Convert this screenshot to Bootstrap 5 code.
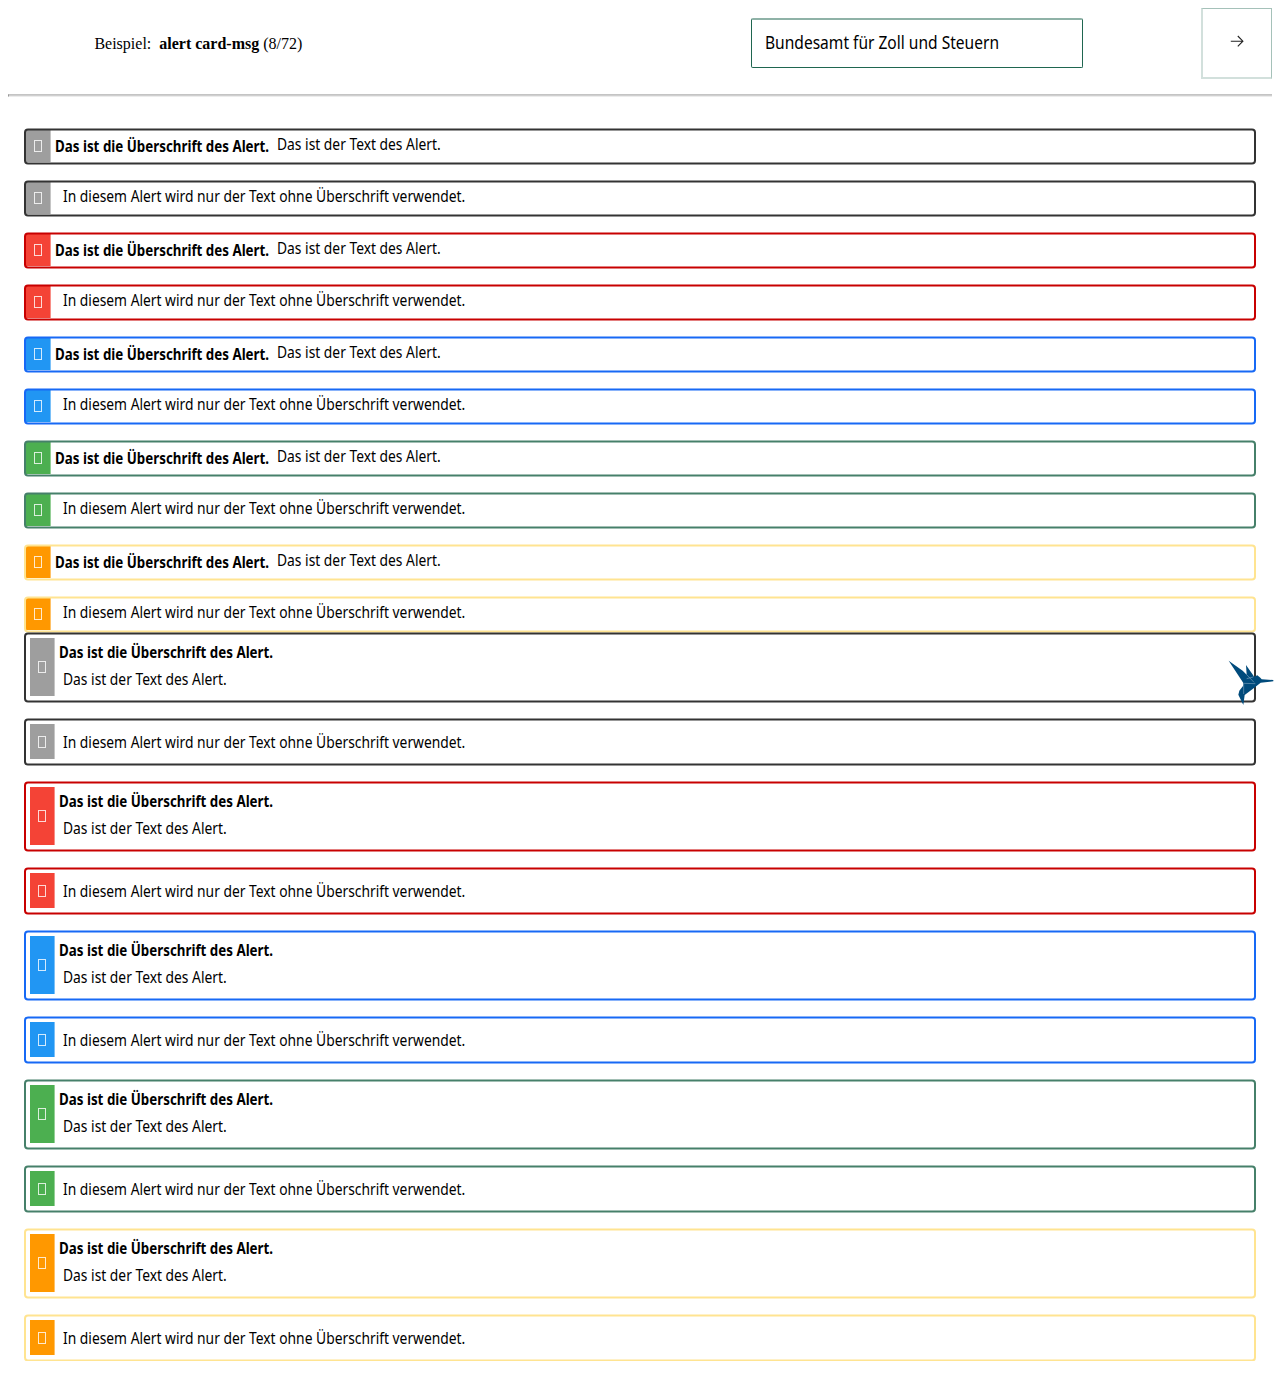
<!DOCTYPE html>
<html lang="de">
<head>
<meta charset="utf-8">
<meta name="viewport" content="width=device-width, initial-scale=1">
<title>alert card-msg</title>
<link href="https://cdn.jsdelivr.net/npm/bootstrap@5.3.0/dist/css/bootstrap.min.css" rel="stylesheet">
<style>
body { color: #000; background: #fff; font-family: "Noto Sans", sans-serif; }
.example-bar { height: 86px; margin: 8px 8px 0; }
.example-name { font-family: "Liberation Serif", serif; font-size: 16px; line-height: 18px; padding-left: 86.4px; margin-bottom: 15px; width: 743px; }
.office-box { width: 332px; height: 50px; border: 1px solid #1f6650; border-top: 2px solid #8fb2a7; border-radius: 2px; padding: 0 0 3px 13.4px; font-size: 18px; margin-bottom: 16px; line-height: 24px; }
.next-btn { width: 71px; height: 71px; border: 1px solid #a5c1b9; border-left: 2px solid #d2e0dc; border-bottom: 2px solid #d2e0dc; background: #fff; padding-bottom: 6px; margin-bottom: 15px; }
.divider { height: 3px; margin: 0 8px -1px; border-top: 1px solid #c4c4c4; border-bottom: 1px solid #ececec; border-left: 1px solid #999; background: #cfcfcf; }
.narrow { display: inline-block; white-space: nowrap; transform: scaleX(.864); transform-origin: 0 50%; }
.msg-list { padding: 32px 24px 0; gap: 16px; }
.msg { --edge: #333; --fill: #9e9e9e; border: 0; border-radius: 4px; color: #000; height: 36px; padding: 2px; font-size: 16px; line-height: 24px; margin: 0; }
.msg::after { content: ""; position: absolute; inset: 0; border: 2px solid var(--edge); border-radius: 4px; transform: translateY(.5px); pointer-events: none; }
.msg-icon { width: 25px; flex: none; background: var(--fill); border-right: 1px solid color-mix(in srgb, var(--fill) 60%, #fff); }
.missing { width: 8px; height: 12px; border: 1px solid rgba(255,255,255,.8); }
.msg-head { width: 214px; flex: none; margin-left: 4px; font-weight: 700; }
.msg-head .narrow { transform: scaleX(.834); }
.msg-text { margin-left: 8px; }
.msg-row .msg-head { padding-top: 4px; }
.msg-row .msg-text { padding-top: 2px; }
.red { --edge: #c80000; --fill: #f44336; }
.blue { --edge: #1769f5; --fill: #2196f3; }
.green { --edge: #46806a; --fill: #4caf50; }
.orange { --edge: #ffe491; --fill: #ff9800; }
.card-list { padding: 0 24px; gap: 16px; }
.msg-card { height: 47px; padding: 6px; }
.msg-card.tall { height: 70px; }
.msg-card .msg-body { padding-top: 6px; }
.msg-card.tall .msg-body { padding-top: 2px; }
.msg-card .msg-head { line-height: 24px; margin-bottom: 3px; }
.bird { position: absolute; left: 1226px; top: 658px; width: 50px; height: 50px; }
</style>
</head>
<body>
<header class="example-bar d-flex align-items-center">
  <div class="example-name">Beispiel:&nbsp; <b>alert card-msg</b> (8/72)</div>
  <div class="office-box d-flex align-items-center"><span class="narrow">Bundesamt für Zoll und Steuern</span></div>
  <button class="next-btn ms-auto d-flex align-items-center justify-content-center" aria-label="Weiter">
    <svg width="14" height="12" viewBox="0 0 14 12" fill="none" stroke="#222" stroke-width="1.1"><path d="M.8 6.2H12.8M7.8 1L12.9 6.2L7.8 11.4"/></svg>
  </button>
</header>
<div class="divider"></div>
<main>
  <section class="msg-list d-flex flex-column" id="rows"></section>
  <section class="card-list d-flex flex-column" id="cards"></section>
</main>
<svg class="bird" viewBox="0 0 150 150">
  <g fill="#004b7c">
    <path d="M8 8L50 38L62 50L60 21L81 51L84 56L94 52L103 59L107 64L142 66L142 70L104 74L80 93L56 111L52 141L37 110L40 98L51 84L52 75Z"/>
  </g>
  <path d="M53 76L88 77M53 78V108M62 50L84 73M62 62L82 57" fill="none" stroke="#a9c3d5" stroke-width="1.4"/>
</svg>
<script>
const icon = '<div class="msg-icon d-flex align-items-center justify-content-center"><span class="missing"></span></div>';
const head = '<div class="msg-head"><span class="narrow">Das ist die Überschrift des Alert.</span></div>';
const text = t => `<div class="msg-text"><span class="narrow">${t}</span></div>`;
const full = 'Das ist der Text des Alert.', only = 'In diesem Alert wird nur der Text ohne Überschrift verwendet.';
let rows = '', cards = '';
for (const c of ['grey', 'red', 'blue', 'green', 'orange']) {
  rows += `<div class="alert msg msg-row d-flex ${c}" role="alert">${icon}${head}${text(full)}</div>`
        + `<div class="alert msg msg-row d-flex ${c}" role="alert">${icon}<div class="ms-1"></div>${text(only)}</div>`;
  cards += `<div class="alert msg msg-card tall d-flex ${c}" role="alert">${icon}<div class="msg-body">${head}${text(full)}</div></div>`
         + `<div class="alert msg msg-card d-flex ${c}" role="alert">${icon}<div class="msg-body">${text(only)}</div></div>`;
}
document.getElementById('rows').innerHTML = rows;
document.getElementById('cards').innerHTML = cards;
</script>
<script src="https://cdn.jsdelivr.net/npm/bootstrap@5.3.0/dist/js/bootstrap.bundle.min.js"></script>
</body>
</html>
